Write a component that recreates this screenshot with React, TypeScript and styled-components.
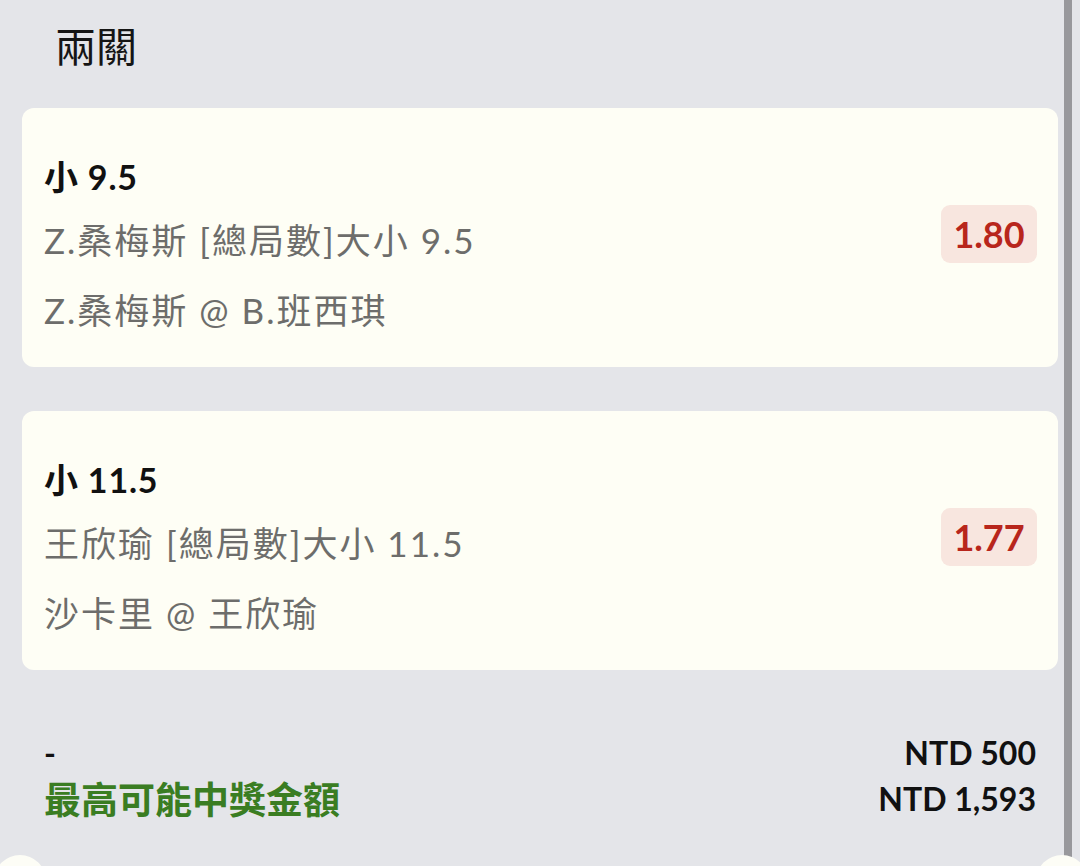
import React from "react";
import styled, { createGlobalStyle } from "styled-components";

const Global = createGlobalStyle`
  html, body { margin: 0; padding: 0; background: #e4e5e9; }
  body { font-family: Lato, "Noto Sans CJK TC", sans-serif; }
`;

const Page = styled.div`
  position: relative;
  width: 1080px;
  height: 866px;
  overflow: hidden;
  display: flex;
  background: #e4e5e9;
`;

const Main = styled.div`
  flex: 1;
  padding: 16px 6px 0 22px;
  display: flex;
  flex-direction: column;
`;

const Scrollbar = styled.div`
  width: 8px;
  margin-right: 8px;
  background: #98989c;
`;

const Title = styled.h1`
  margin: 0 0 36px 33px;
  font-family: "Noto Sans CJK TC", sans-serif;
  font-weight: 400;
  font-size: 41px;
  line-height: 56px;
  color: #151515;
`;

const Card = styled.div`
  background: #fefef5;
  border-radius: 12px;
  padding: 0 21px 0 22px;
  display: flex;
  align-items: center;
  justify-content: space-between;
  margin-bottom: 44px;
`;

const Info = styled.div`
  display: flex;
  flex-direction: column;
  padding: 46px 0 33px;
`;

const Selection = styled.div`
  font-family: Lato, "Noto Sans CJK TC", sans-serif;
  font-weight: 700;
  font-size: 34px;
  line-height: 46px;
  letter-spacing: 0.8px;
  color: #111;
`;

const Detail = styled.div<{ $gap: number }>`
  font-family: Lato, "Noto Sans CJK TC", sans-serif;
  font-weight: 400;
  font-size: 35px;
  line-height: 48px;
  letter-spacing: 2px;
  color: #6d6d6b;
  margin-top: ${(p) => p.$gap}px;
`;

const Odds = styled.div`
  background: #f8e6df;
  color: #b8261c;
  border-radius: 9px;
  font-family: Lato, sans-serif;
  font-weight: 700;
  font-size: 36px;
  line-height: 58px;
  width: 96px;
  text-align: center;
  margin-top: -8px;
`;

const Summary = styled.div`
  margin-top: 16px;
  padding: 0 22px;
  display: flex;
  flex-direction: column;
`;

const SumRow = styled.div`
  display: flex;
  justify-content: space-between;
  align-items: center;
  height: 44px;
  margin-bottom: 2px;
`;

const Dash = styled.span`
  font-family: Lato, sans-serif;
  font-weight: 700;
  font-size: 32px;
  color: #111;
`;

const GreenLabel = styled.span`
  font-family: "Noto Sans CJK TC", sans-serif;
  font-weight: 700;
  font-size: 37px;
  color: #3a7d22;
`;

const Amount = styled.span`
  font-family: Lato, sans-serif;
  font-weight: 700;
  font-size: 32px;
  color: #111;
`;

const Bubble = styled.div<{ $left: number }>`
  position: absolute;
  left: ${(p) => p.$left}px;
  top: 855px;
  width: 52px;
  height: 52px;
  border-radius: 50%;
  background: #fdfdf6;
`;

const legs = [
  { sel: "小 9.5", market: "Z.桑梅斯 [總局數]大小 9.5", match: "Z.桑梅斯 @ B.班西琪", odds: "1.80" },
  { sel: "小 11.5", market: "王欣瑜 [總局數]大小 11.5", match: "沙卡里 @ 王欣瑜", odds: "1.77" },
];

export default function App() {
  return (
    <Page>
      <Global />
      <Main>
        <Title>兩關</Title>
        {legs.map((l) => (
          <Card key={l.sel}>
            <Info>
              <Selection>{l.sel}</Selection>
              <Detail $gap={16}>{l.market}</Detail>
              <Detail $gap={22}>{l.match}</Detail>
            </Info>
            <Odds>{l.odds}</Odds>
          </Card>
        ))}
        <Summary>
          <SumRow>
            <Dash>-</Dash>
            <Amount>NTD 500</Amount>
          </SumRow>
          <SumRow>
            <GreenLabel>最高可能中獎金額</GreenLabel>
            <Amount>NTD 1,593</Amount>
          </SumRow>
        </Summary>
      </Main>
      <Scrollbar />
      <Bubble $left={-6} />
      <Bubble $left={1036} />
    </Page>
  );
}
